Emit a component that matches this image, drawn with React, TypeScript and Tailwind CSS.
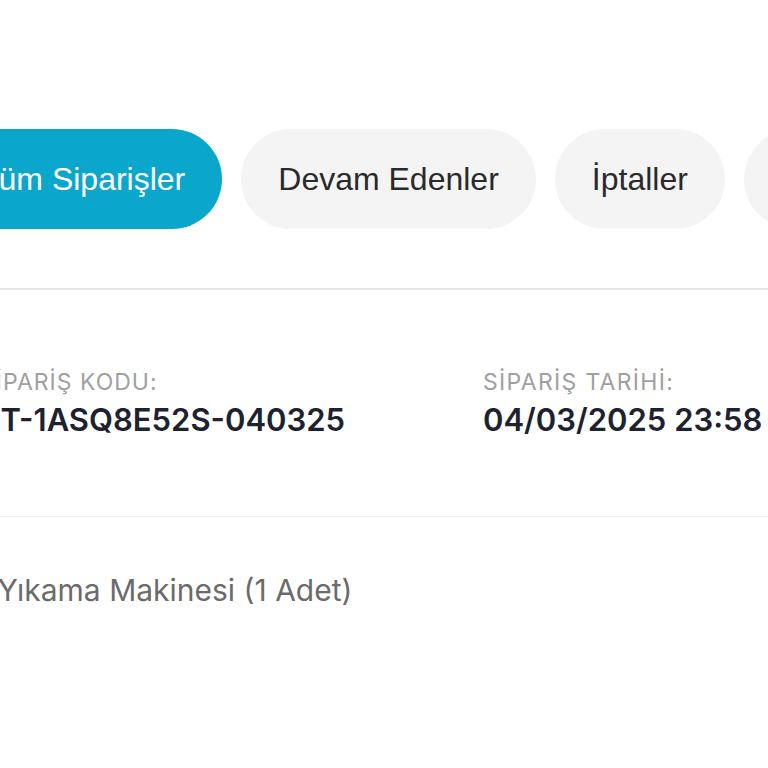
import React from "react";

const tabs = [
  { label: "Tüm Siparişler", active: true },
  { label: "Devam Edenler", active: false },
  { label: "İptaller", active: false },
  { label: "İadeler", active: false },
];

const OrderTabs: React.FC = () => (
  <div className="flex items-center gap-[19px] ml-[-58px] pt-[129px] pb-[59px] whitespace-nowrap">
    {tabs.map((tab) => (
      <button
        key={tab.label}
        className={
          tab.active
            ? "h-[100px] px-[37px] rounded-full bg-[#0ba6cc] text-white text-[32px] shrink-0"
            : "h-[100px] px-[37px] rounded-full bg-[#f4f4f4] text-[#2a2a2a] text-[32px] shrink-0"
        }
        style={{ fontFamily: '"Liberation Sans", Arial, sans-serif' }}
      >
        {tab.label}
      </button>
    ))}
  </div>
);

const OrderCard: React.FC = () => (
  <div style={{ fontFamily: 'Inter, "Noto Sans", sans-serif' }}>
    <div className="flex pt-[78px] pb-[76px] ml-[-20px] whitespace-nowrap">
      <div className="w-[503px] shrink-0">
        <div className="text-[23px] leading-[28px] uppercase tracking-[1px] text-[#a0a0a0]">
          SİPARİŞ KODU:
        </div>
        <div className="text-[31px] leading-[40px] font-semibold text-[#1d2230] mt-[4px]">
          TT-1ASQ8E52S-040325
        </div>
      </div>
      <div className="shrink-0">
        <div className="text-[23px] leading-[28px] uppercase tracking-[1.3px] text-[#a0a0a0]">
          SİPARİŞ TARİHİ:
        </div>
        <div className="text-[31px] leading-[40px] font-semibold text-[#1d2230] mt-[4px]">
          04/03/2025 23:58
        </div>
      </div>
    </div>
    <div className="border-t border-[#f0f0f0] pt-[55px] whitespace-nowrap ml-[-112px]">
      <span className="text-[30px] leading-[36px] text-[#6b6b6b]">Bulaşık Yıkama Makinesi (1 Adet)</span>
    </div>
  </div>
);

export default function App() {
  return (
    <div className="w-[768px] h-[768px] overflow-hidden bg-white">
      <div className="border-b-2 border-[#e6e6e6]">
        <OrderTabs />
      </div>
      <OrderCard />
    </div>
  );
}
